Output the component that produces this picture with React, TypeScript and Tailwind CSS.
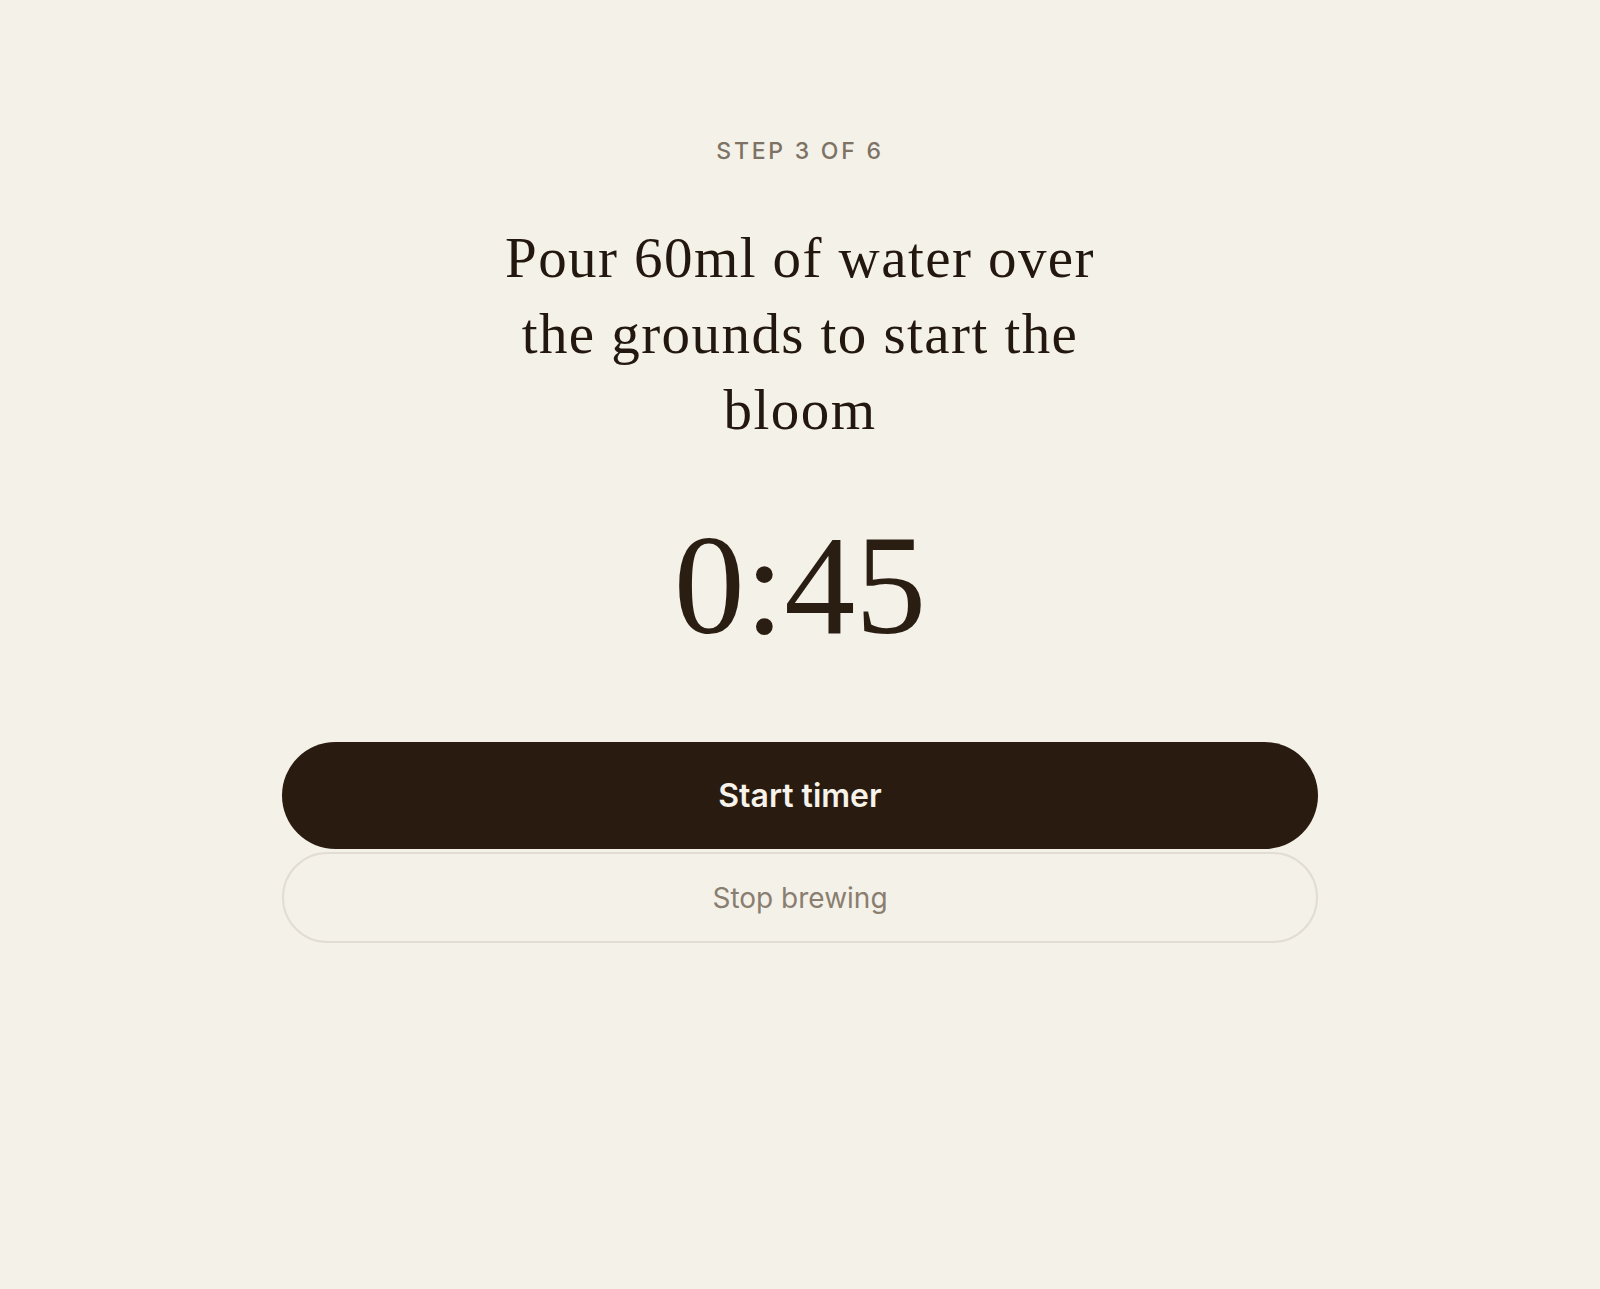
export default function App() {
  return (
    <div className="min-h-[1289px] w-full bg-[#f4f1e9] flex flex-col items-center pt-[137px]">
      {/* Step counter */}
      <p className="font-['Inter','Liberation_Sans',sans-serif] text-[23px] leading-[28px] tracking-[0.12em] text-[#7d7264] font-medium uppercase">
        Step 3 of 6
      </p>

      {/* Instruction */}
      <h1 className="mt-[55px] max-w-[650px] text-center font-['Liberation_Serif','DejaVu_Serif',serif] text-[57px] leading-[76px] tracking-[0.025em] text-[#231810]">
        Pour 60ml of water over the grounds to start the bloom
      </h1>

      {/* Timer */}
      <div className="mt-[62px] font-['Liberation_Serif','DejaVu_Serif',serif] text-[142px] leading-[150px] text-[#2a1d12]">
        0:45
      </div>

      {/* Actions */}
      <div className="mt-[82px] w-[1036px] flex flex-col gap-[3px]">
        <button className="h-[107px] rounded-full bg-[#291b10] text-[#f7f2ea] font-['Inter','Liberation_Sans',sans-serif] text-[32px] font-semibold">
          Start timer
        </button>
        <button className="h-[91px] rounded-full border-2 border-[#e2ddd4] bg-transparent text-[#8a7e70] font-['Inter','Liberation_Sans',sans-serif] text-[28px]">
          Stop brewing
        </button>
      </div>
    </div>
  );
}
